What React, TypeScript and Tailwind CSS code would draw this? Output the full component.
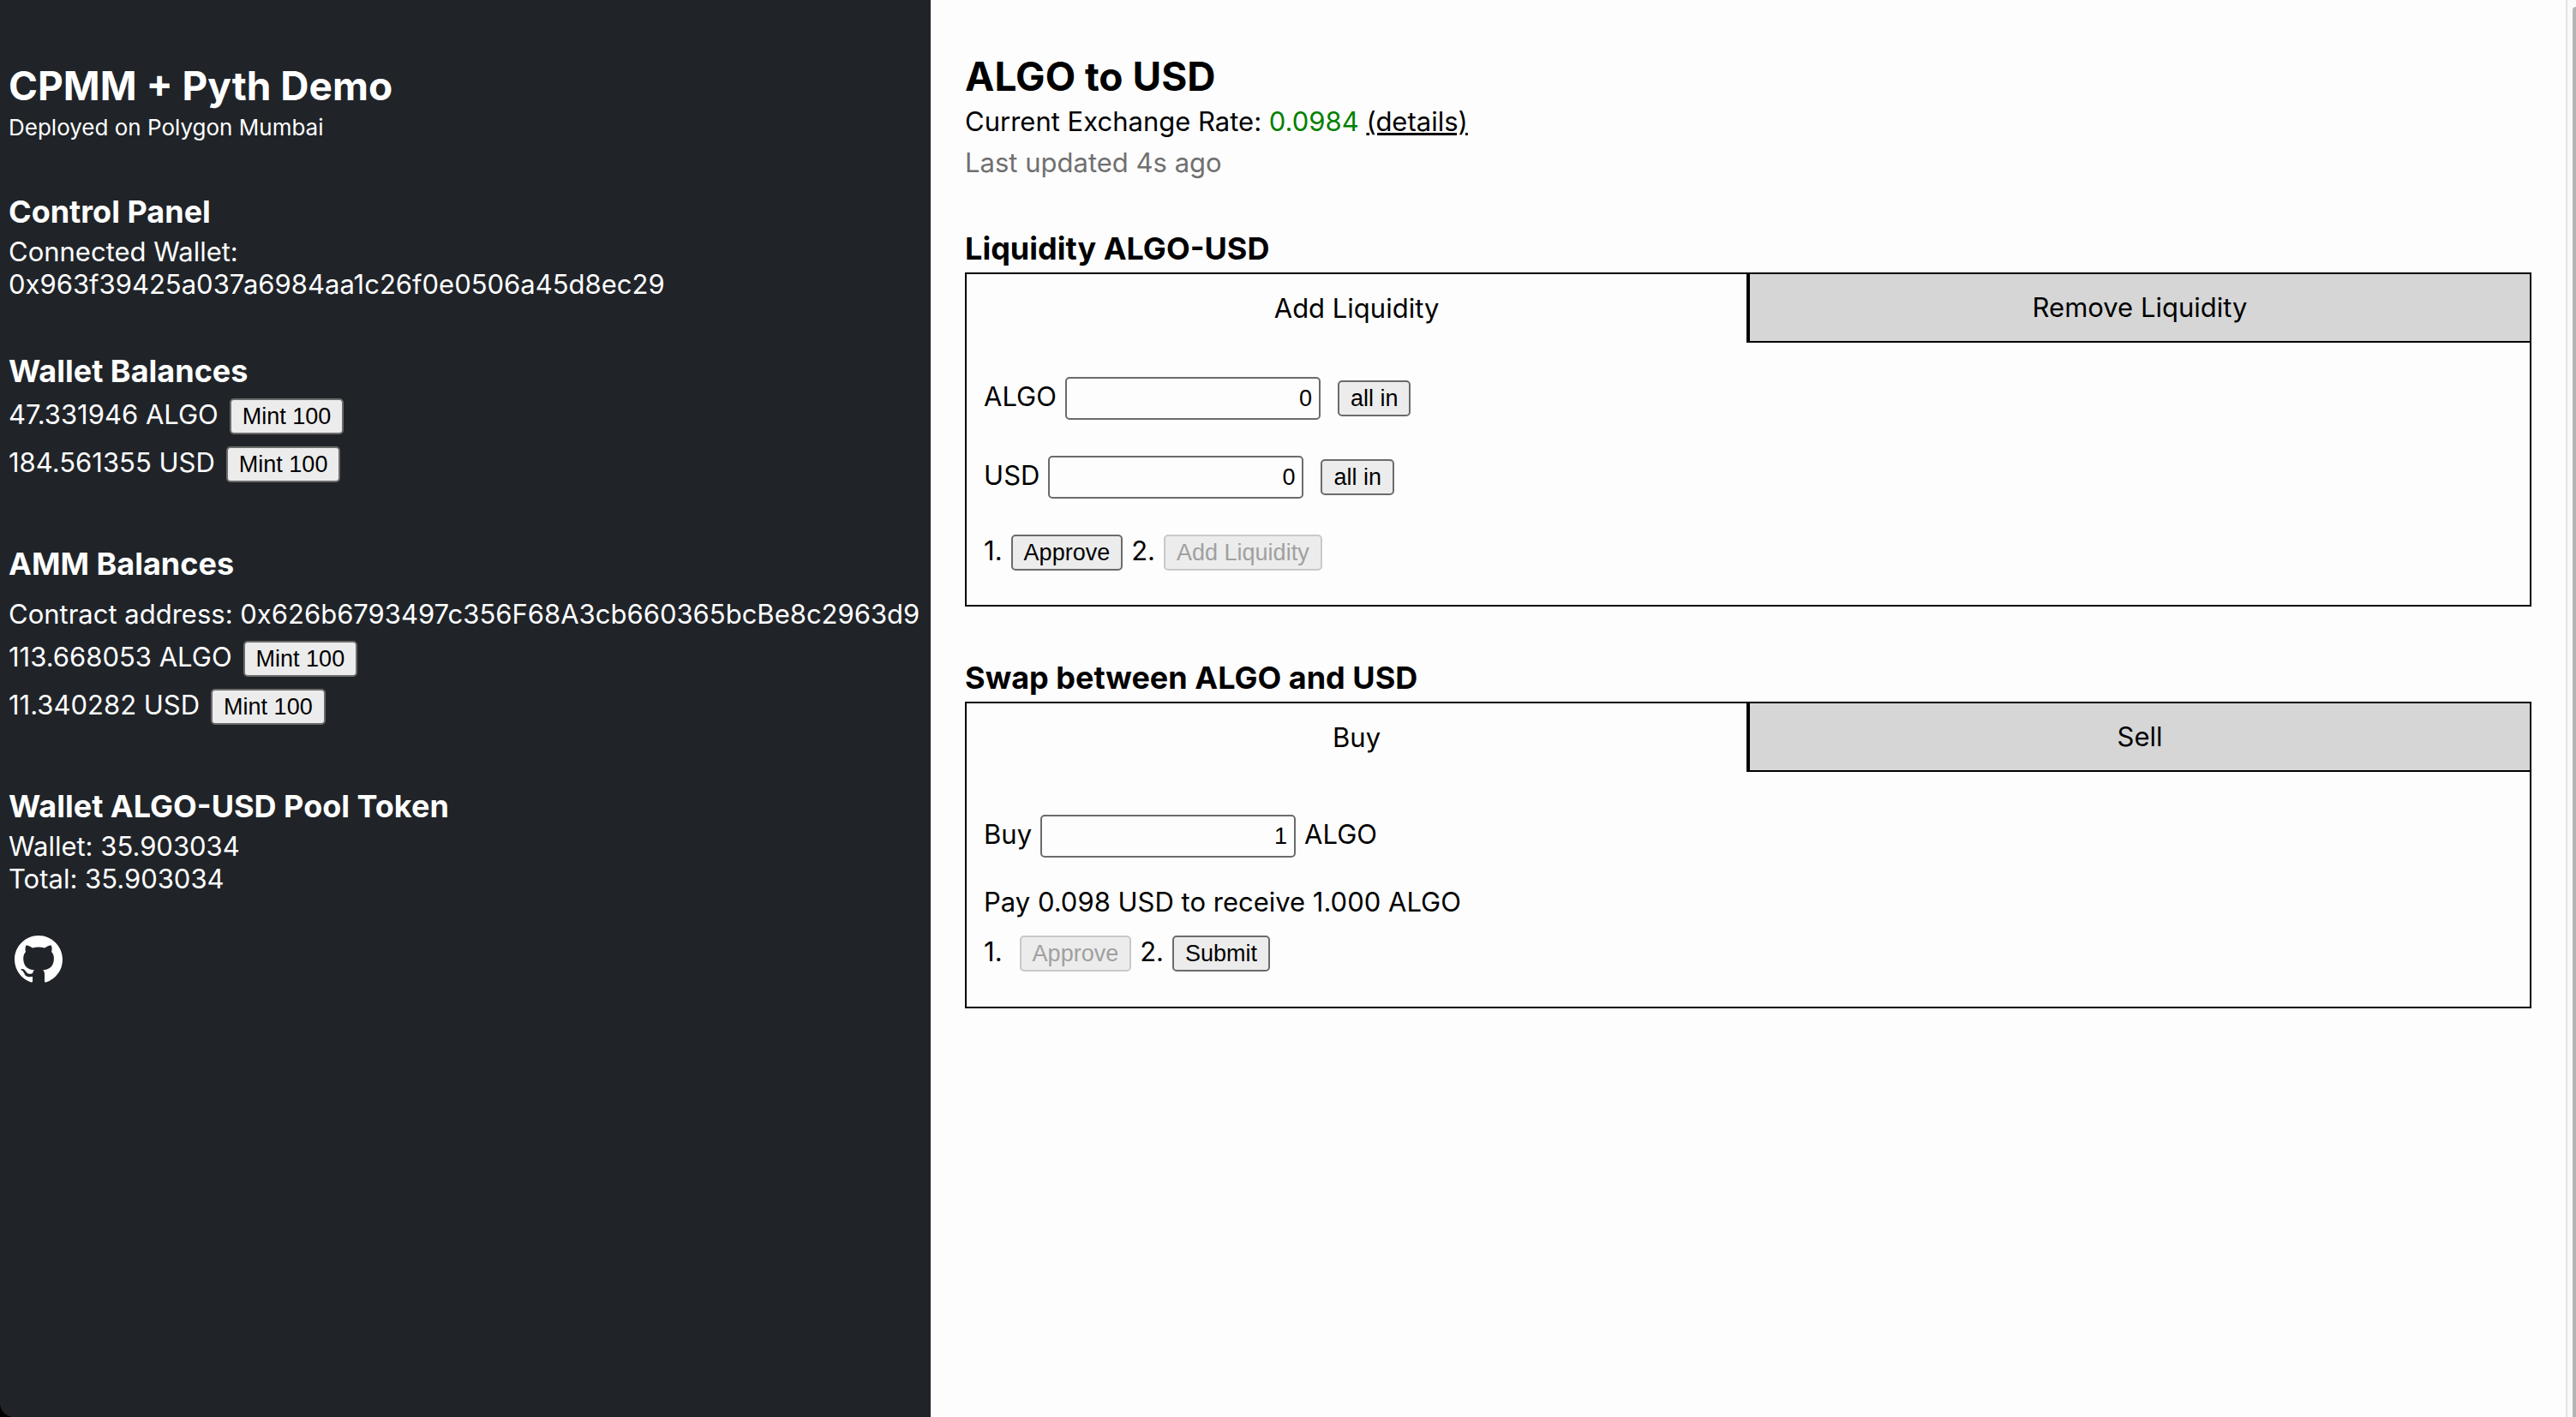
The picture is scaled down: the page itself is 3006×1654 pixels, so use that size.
import React, { useState } from "react";

function Button({ children, disabled = false }: { children: React.ReactNode; disabled?: boolean }) {
  return (
    <button
      type="button"
      disabled={disabled}
      className="h-[42px] shrink-0 rounded-[5px] border-2 border-[#6b6b6b] bg-[#ececec] px-[13px] font-['Liberation_Sans',sans-serif] text-[27px] leading-[38px] text-black disabled:border-[#c9c9c9] disabled:bg-[#ececec] disabled:text-[#a0a0a0]"
    >
      {children}
    </button>
  );
}

function Heading({ children }: { children: React.ReactNode }) {
  return <h2 className="text-[36px] leading-[56px] font-bold">{children}</h2>;
}

function Balance({ amount, token }: { amount: string; token: string }) {
  return (
    <div className="flex items-baseline gap-[13px]">
      <span>
        {amount} {token}
      </span>
      <Button>Mint 100</Button>
    </div>
  );
}

function Amount({ id, label, initial }: { id: string; label: string; initial: string }) {
  const [value, setValue] = useState(initial);
  return (
    <>
      <label htmlFor={id}>{label}</label>
      <input
        id={id}
        type="text"
        inputMode="decimal"
        value={value}
        onChange={(e) => setValue(e.target.value)}
        className="h-[50px] w-[298px] rounded-[5px] border-2 border-[#6b6b6b] bg-[#fdfdfd] px-2 text-right font-['Liberation_Sans',sans-serif] text-[27px] text-black"
      />
    </>
  );
}

function Panel({ tabs, children }: { tabs: [string, string]; children: React.ReactNode }) {
  return (
    <div className="border-2 border-black">
      <div role="tablist" className="grid grid-cols-2">
        <button type="button" role="tab" aria-selected="true" className="h-20 border-r-2 border-black">
          {tabs[0]}
        </button>
        <button
          type="button"
          role="tab"
          aria-selected="false"
          className="h-20 border-b-2 border-l-2 border-black bg-[#d6d6d6]"
        >
          {tabs[1]}
        </button>
      </div>
      {children}
    </div>
  );
}

export default function App() {
  return (
    <div className="flex min-h-screen bg-black font-['Inter','Liberation_Sans',sans-serif] text-[31px] leading-[38px] text-black">
      <aside className="w-[36.13%] shrink-0 rounded-bl-2xl bg-[#202429] px-[10px] pt-[71px] whitespace-nowrap text-white">
        <h1 className="text-[46px] leading-[58px] font-bold">CPMM + Pyth Demo</h1>
        <p className="text-[26px] leading-[40px]">Deployed on Polygon Mumbai</p>

        <section className="mt-[50px]">
          <Heading>Control Panel</Heading>
          <p>Connected Wallet:</p>
          <p>0x963f39425a037a6984aa1c26f0e0506a45d8ec29</p>
        </section>

        <section className="mt-[54px]">
          <Heading>Wallet Balances</Heading>
          <div className="mt-1 flex flex-col gap-[14px]">
            <Balance amount="47.331946" token="ALGO" />
            <Balance amount="184.561355" token="USD" />
          </div>
        </section>

        <section className="mt-[67px]">
          <Heading>AMM Balances</Heading>
          <p className="mt-3">Contract address: 0x626b6793497c356F68A3cb660365bcBe8c2963d9</p>
          <div className="mt-3 flex flex-col gap-[14px]">
            <Balance amount="113.668053" token="ALGO" />
            <Balance amount="11.340282" token="USD" />
          </div>
        </section>

        <section className="mt-[67px]">
          <Heading>Wallet ALGO-USD Pool Token</Heading>
          <p>Wallet: 35.903034</p>
          <p>Total: 35.903034</p>
        </section>

        <a href="https://github.com" aria-label="GitHub" className="mt-[47px] ml-[7px] block w-14">
          <svg viewBox="0 0 16 16" className="size-14 fill-white" aria-hidden="true">
            <path d="M8 0C3.58 0 0 3.58 0 8c0 3.54 2.29 6.53 5.47 7.59.4.07.55-.17.55-.38 0-.19-.01-.82-.01-1.49-2.01.37-2.53-.49-2.69-.94-.09-.23-.48-.94-.82-1.13-.28-.15-.68-.52-.01-.53.63-.01 1.08.58 1.23.82.72 1.21 1.87.87 2.33.66.07-.52.28-.87.51-1.07-1.78-.2-3.64-.89-3.64-3.95 0-.87.31-1.59.82-2.15-.08-.2-.36-1.02.08-2.12 0 0 .67-.21 2.2.82.64-.18 1.32-.27 2-.27s1.36.09 2 .27c1.53-1.04 2.2-.82 2.2-.82.44 1.1.16 1.92.08 2.12.51.56.82 1.27.82 2.15 0 3.07-1.87 3.75-3.65 3.95.29.25.54.73.54 1.48 0 1.07-.01 1.93-.01 2.2 0 .21.15.46.55.38A8.01 8.01 0 0 0 16 8c0-4.42-3.58-8-8-8Z" />
          </svg>
        </a>
      </aside>

      <main className="min-w-0 flex-1 bg-[#fdfdfd] px-10 pt-[60px]">
        <h1 className="text-[46px] leading-[58px] font-bold">ALGO to USD</h1>
        <p className="leading-[48px]">
          Current Exchange Rate: <span className="text-[#008000]">0.0984</span>{" "}
          <a href="#details" className="underline">
            (details)
          </a>
        </p>
        <p className="leading-[48px] text-[#707070]">Last updated 4s ago</p>

        <section className="mt-[48px]">
          <Heading>Liquidity ALGO-USD</Heading>
          <Panel tabs={["Add Liquidity", "Remove Liquidity"]}>
            <div className="flex flex-col gap-[42px] px-5 pt-10 pb-10">
              <div className="flex items-baseline gap-[10px]">
                <Amount id="algo" label="ALGO" initial="0" />
                <span className="ml-[10px]">
                  <Button>all in</Button>
                </span>
              </div>
              <div className="flex items-baseline gap-[10px]">
                <Amount id="usd" label="USD" initial="0" />
                <span className="ml-[10px]">
                  <Button>all in</Button>
                </span>
              </div>
              <div className="flex items-baseline gap-[10px]">
                <span>1.</span>
                <Button>Approve</Button>
                <span>2.</span>
                <Button disabled>Add Liquidity</Button>
              </div>
            </div>
          </Panel>
        </section>

        <section className="mt-[55px]">
          <Heading>Swap between ALGO and USD</Heading>
          <Panel tabs={["Buy", "Sell"]}>
            <div className="px-5 pt-[50px] pb-[41px]">
              <div className="flex items-baseline gap-[10px]">
                <Amount id="buy" label="Buy" initial="1" />
                <span>ALGO</span>
              </div>
              <p className="mt-[33px]">Pay 0.098 USD to receive 1.000 ALGO</p>
              <div className="mt-5 flex items-baseline gap-[10px]">
                <span className="mr-[10px]">1.</span>
                <Button disabled>Approve</Button>
                <span>2.</span>
                <Button>Submit</Button>
              </div>
            </div>
          </Panel>
        </section>
      </main>

      <div aria-hidden="true" className="flex w-3 shrink-0 justify-end border-l-2 border-[#e4e4e4] bg-[#fafafa] pt-2">
        <div className="w-1 rounded-tl bg-[#b4b4b8]" />
      </div>
    </div>
  );
}
